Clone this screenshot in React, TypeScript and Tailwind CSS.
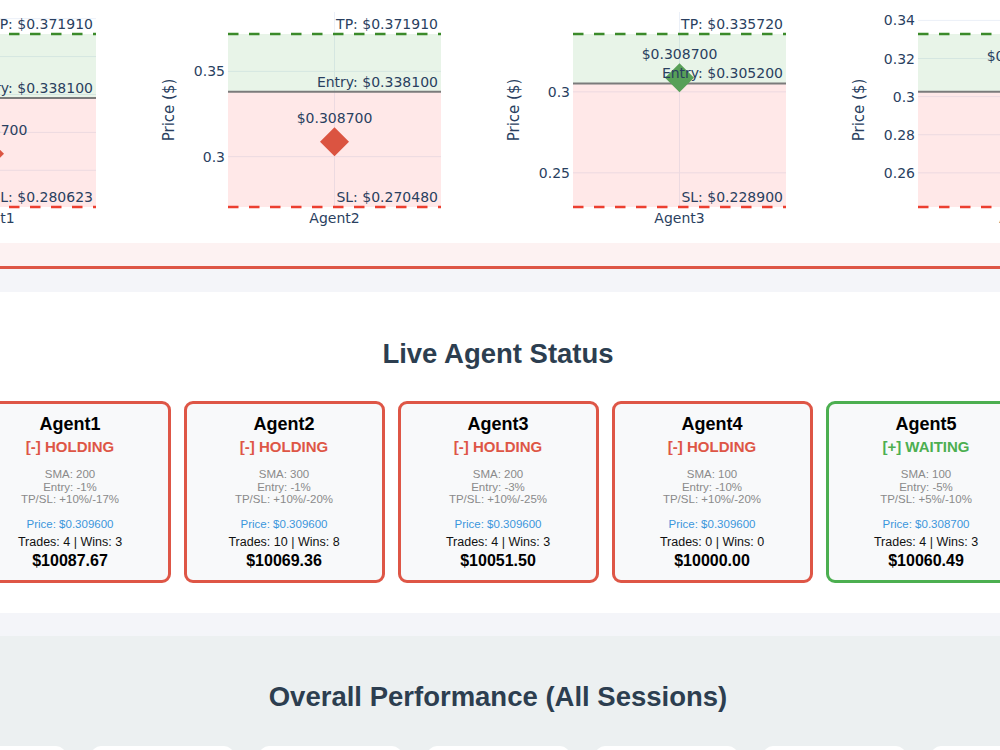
import React from 'react';

type ChartSpec = {
  agent: string;
  tp: number;
  entry: number;
  sl: number;
  price: number;
  step: number;
};

type AgentStatus = {
  name: string;
  holding: boolean;
  sma: number;
  entry: string;
  tpsl: string;
  price: string;
  trades: number;
  wins: number;
  value: string;
};

const charts: ChartSpec[] = [
  { agent: 'Agent1', tp: 0.37191, entry: 0.3381, sl: 0.280623, price: 0.3087, step: 0.02 },
  { agent: 'Agent2', tp: 0.37191, entry: 0.3381, sl: 0.27048, price: 0.3087, step: 0.05 },
  { agent: 'Agent3', tp: 0.33572, entry: 0.3052, sl: 0.2289, price: 0.3087, step: 0.05 },
  { agent: 'Agent4', tp: 0.33286, entry: 0.3026, sl: 0.24208, price: 0.3087, step: 0.02 },
];

const agents: AgentStatus[] = [
  { name: 'Agent1', holding: true, sma: 200, entry: '-1%', tpsl: '+10%/-17%', price: '0.309600', trades: 4, wins: 3, value: '10087.67' },
  { name: 'Agent2', holding: true, sma: 300, entry: '-1%', tpsl: '+10%/-20%', price: '0.309600', trades: 10, wins: 8, value: '10069.36' },
  { name: 'Agent3', holding: true, sma: 200, entry: '-3%', tpsl: '+10%/-25%', price: '0.309600', trades: 4, wins: 3, value: '10051.50' },
  { name: 'Agent4', holding: true, sma: 100, entry: '-10%', tpsl: '+10%/-20%', price: '0.309600', trades: 0, wins: 0, value: '10000.00' },
  { name: 'Agent5', holding: false, sma: 100, entry: '-5%', tpsl: '+5%/-10%', price: '0.308700', trades: 4, wins: 3, value: '10060.49' },
];

const overall = [
  { label: 'Sessions', value: '12' },
  { label: 'Total Trades', value: '22' },
  { label: 'Total Wins', value: '17' },
  { label: 'Win Rate', value: '77.3%' },
  { label: 'Best Agent', value: 'Agent1' },
  { label: 'Total P/L', value: '+$269.02' },
  { label: 'Avg Return', value: '+0.54%' },
];

// plot box inside each chart (plotly margins)
const W = 345;
const H = 243;
const PL = 75;
const PR = 288;
const PT = 12;
const PB = 207;
const TP_Y = 34;

const fmtTick = (v: number) => String(Number(v.toFixed(2)));

const PriceChart: React.FC<{ c: ChartSpec }> = ({ c }) => {
  const scale = (PB - TP_Y) / (c.tp - c.sl);
  const y = (v: number) => TP_Y + (c.tp - v) * scale;
  const top = c.tp + (TP_Y - PT) / scale;
  const ticks: number[] = [];
  for (let k = Math.ceil(c.sl / c.step - 1e-6); k * c.step <= top + 1e-9; k++) {
    const v = k * c.step;
    if (y(v) >= PT && y(v) <= PB) ticks.push(v);
  }
  const cx = (PL + PR) / 2;
  const py = y(c.price);
  const ey = y(c.entry);
  const up = c.price >= c.entry;
  const d = 14.5;

  return (
    <svg width={W} height={H} className="shrink-0 font-['DejaVu_Sans',Verdana,sans-serif]">
      {/* grid */}
      {ticks.map((t) => (
        <line key={t} x1={PL} x2={PR} y1={y(t)} y2={y(t)} stroke="#ebf0f8" strokeWidth={1} />
      ))}
      <line x1={cx} x2={cx} y1={PT} y2={PB} stroke="#ebf0f8" strokeWidth={1} />

      {/* profit / loss zones */}
      <rect x={PL} y={TP_Y} width={PR - PL} height={ey - TP_Y} fill="#008000" fillOpacity={0.09} />
      <rect x={PL} y={ey} width={PR - PL} height={PB - ey} fill="#ff0000" fillOpacity={0.09} />

      <line x1={PL} x2={PR} y1={TP_Y} y2={TP_Y} stroke="#3b8a2a" strokeWidth={2.5} strokeDasharray="10.5 10.5" />
      <line x1={PL} x2={PR} y1={PB} y2={PB} stroke="#ec3f30" strokeWidth={2.5} strokeDasharray="10.5 10.5" />
      <line x1={PL} x2={PR} y1={ey} y2={ey} stroke="#7b7b7b" strokeWidth={2} />

      {/* current price */}
      <polygon
        points={`${cx},${py - d} ${cx + d},${py} ${cx},${py + d} ${cx - d},${py}`}
        fill={up ? '#58a058' : '#db5441'}
      />
      <text x={cx} y={py - 24} fontSize={14} fill="#2a3f5f" textAnchor="middle" dominantBaseline="central">
        ${c.price.toFixed(6)}
      </text>

      <text x={PR - 3} y={TP_Y - 10} fontSize={14} fill="#2a3f5f" textAnchor="end" dominantBaseline="central">
        TP: ${c.tp.toFixed(6)}
      </text>
      <text x={PR - 3} y={ey - 10} fontSize={14} fill="#2a3f5f" textAnchor="end" dominantBaseline="central">
        Entry: ${c.entry.toFixed(6)}
      </text>
      <text x={PR - 3} y={PB - 10} fontSize={14} fill="#2a3f5f" textAnchor="end" dominantBaseline="central">
        SL: ${c.sl.toFixed(6)}
      </text>

      {/* axes */}
      {ticks.map((t) => (
        <text key={t} x={72} y={y(t)} fontSize={14} fill="#2a3f5f" textAnchor="end" dominantBaseline="central">
          {fmtTick(t)}
        </text>
      ))}
      <text x={cx} y={218} fontSize={14} fill="#2a3f5f" textAnchor="middle" dominantBaseline="central">
        {c.agent}
      </text>
      <text
        x={16}
        y={110}
        fontSize={15}
        fill="#2a3f5f"
        textAnchor="middle"
        dominantBaseline="central"
        transform="rotate(-90 16 110)"
      >
        Price ($)
      </text>
    </svg>
  );
};

const AgentCard: React.FC<{ a: AgentStatus }> = ({ a }) => (
  <div
    className={
      a.holding
        ? 'w-[201px] shrink-0 rounded-[9px] border-[3px] border-[#de5646] bg-[#f8f9fa] pt-[9px] pb-[9.5px] text-center'
        : 'w-[201px] shrink-0 rounded-[9px] border-[3px] border-[#4caf50] bg-[#f8f9fa] pt-[9px] pb-[9.5px] text-center'
    }
  >
    <div className="text-[18px] leading-[22px] font-bold text-black">{a.name}</div>
    <div
      className={
        a.holding
          ? 'mt-[2px] text-[15px] leading-[20px] font-bold text-[#de5646]'
          : 'mt-[2px] text-[15px] leading-[20px] font-bold text-[#4caf50]'
      }
    >
      {a.holding ? '[-] HOLDING' : '[+] WAITING'}
    </div>
    <div className="mt-[11px] text-[11.5px] leading-[12.5px] text-[#8a8a8a]">
      <div>SMA: {a.sma}</div>
      <div>Entry: {a.entry}</div>
      <div>TP/SL: {a.tpsl}</div>
    </div>
    <div className="mt-[11px] text-[11.5px] leading-[14px] text-[#3b96dc]">Price: ${a.price}</div>
    <div className="mt-[3px] text-[12.5px] leading-[16px] text-[#111]">
      Trades: {a.trades} | Wins: {a.wins}
    </div>
    <div className="mt-[1px] text-[16px] leading-[20px] font-bold text-black">${a.value}</div>
  </div>
);

export default function App() {
  return (
    <div className="h-screen overflow-hidden bg-[#f4f5f9] font-['Liberation_Sans',Arial,sans-serif]">
      {/* open positions */}
      <section className="bg-[#fdf2f2] border-b-[3px] border-[#de5646] pb-[23px]">
        <div className="flex justify-center bg-white pr-[4px]">
          {charts.map((c) => (
            <PriceChart key={c.agent} c={c} />
          ))}
        </div>
      </section>

      {/* live status */}
      <section className="mt-[23px] bg-white pt-[45px] pb-[30px]">
        <h2 className="pr-[4px] text-center text-[27.5px] leading-[34px] font-bold text-[#2c3e50]">
          Live Agent Status
        </h2>
        <div className="mt-[30px] flex justify-center gap-[13px] pr-[4px]">
          {agents.map((a) => (
            <AgentCard key={a.name} a={a} />
          ))}
        </div>
      </section>

      {/* overall */}
      <section className="mt-[23px] bg-[#ecf0f1] pt-[44px] pb-[40px]">
        <h2 className="pr-[4px] text-center text-[27.5px] leading-[34px] font-bold text-[#2c3e50]">
          Overall Performance (All Sessions)
        </h2>
        <div className="mt-[32px] flex justify-center gap-[25px] pr-[4px]">
          {overall.map((o) => (
            <div key={o.label} className="w-[143px] shrink-0 rounded-[10px] bg-white px-3 py-4 text-center">
              <div className="text-[12px] text-[#7f8c8d]">{o.label}</div>
              <div className="mt-1 text-[18px] font-bold text-[#2c3e50]">{o.value}</div>
            </div>
          ))}
        </div>
      </section>
    </div>
  );
}
